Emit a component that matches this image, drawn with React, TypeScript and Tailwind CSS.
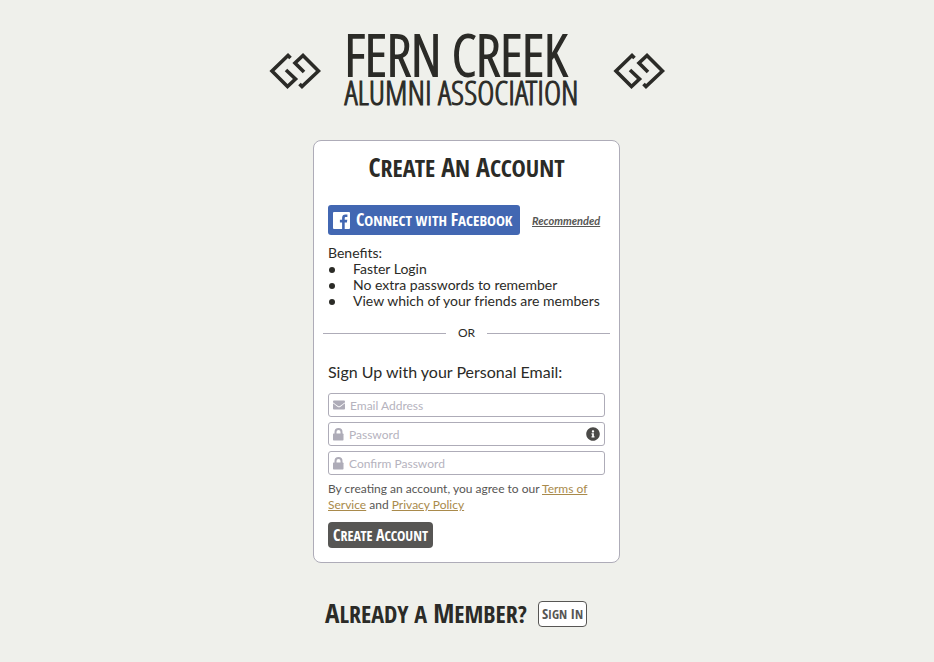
import React from 'react';
import { FaEnvelope, FaInfoCircle } from 'react-icons/fa';

const display = "font-['Open_Sans_Condensed','Roboto_Condensed',sans-serif] font-bold";

function Caps({ text, initial }: { text: string; initial: string }) {
  return (
    <>
      {text.split(' ').map((word, i) => (
        <React.Fragment key={i}>
          {i > 0 && ' '}
          <span className={`inline-block uppercase ${/^[A-Z]/.test(word) ? initial : ''}`}>{word}</span>
        </React.Fragment>
      ))}
    </>
  );
}

function Emblem() {
  return (
    <svg width="52" height="38" viewBox="0 0 52 38" fill="none" stroke="#2b2b27" strokeWidth="3.600" aria-hidden="true">
      <path d="M21.500 6 L19 3.500 L3 19 L18.500 34.500 L26.500 27 L17 18" />
      <path d="M30.500 32 L33 34.500 L49.500 19 L34 3.500 L26 11 L35 20" />
    </svg>
  );
}

function LockIcon() {
  return (
    <svg width="11" height="13" viewBox="0 0 11 13" aria-hidden="true">
      <path d="M2.500 6V4a3 3 0 0 1 6 0v2" fill="none" stroke="currentColor" strokeWidth="2" />
      <rect y="5.500" width="10.500" height="7" rx="0.700" fill="currentColor" />
    </svg>
  );
}

function Field({ id, label, type, icon, extra }: { id: string; label: string; type: string; icon: React.ReactNode; extra?: React.ReactNode }) {
  return (
    <div className="flex h-6 items-center gap-[5px] rounded-[3px] border border-[#aeacb8] bg-white px-1 text-[#aeacb8]">
      <label htmlFor={id} aria-label={label} className="shrink-0">{icon}</label>
      <input id={id} type={type} placeholder={label} className="min-w-0 flex-1 pt-px text-xs text-[#2b2b27] outline-none placeholder:text-[#b5b3be]" />
      {extra}
    </div>
  );
}

export default function App() {
  return (
    <main className="flex min-h-screen flex-col items-center bg-[#eff0eb] pt-8 pr-px pb-8 font-['Lato',sans-serif] text-[#2b2b27]">
      <header className="flex items-center gap-6">
        <Emblem />
        <h1 className="flex w-[244px] flex-col font-['Open_Sans_Condensed_Light','Open_Sans_Condensed','Roboto_Condensed',sans-serif] font-light whitespace-nowrap uppercase">
          <span className="text-[57px] leading-[44px] [-webkit-text-stroke:2px_#2b2b27]">Fern Creek</span>
          <span className="text-[33px] leading-[34px] [-webkit-text-stroke:1px_#2b2b27]">Alumni Association</span>
        </h1>
        <Emblem />
      </header>

      <section className="mt-[30px] w-full max-w-[307px] rounded-lg border border-[#aeacb8] bg-white px-[14px] pt-[7px] pb-[14px]">
        <h2 className={`text-center text-2xl leading-[38px] whitespace-nowrap ${display}`}>
          <Caps text="Create An Account" initial="first-letter:text-[26px]" />
        </h2>

        <div className="mt-[18px] flex items-center gap-3">
          <button type="button" className={`flex h-[30px] w-48 items-center gap-[6px] rounded-[3px] bg-[#4267b2] pl-[5px] text-[15px] leading-5 whitespace-nowrap text-white ${display}`}>
            <svg width="17" height="17" viewBox="0 0 17 17" className="shrink-0" aria-hidden="true">
              <path fill="#fff" d="M1 0h15a1 1 0 0 1 1 1v15a1 1 0 0 1-1 1h-4.300v-6.600h2.200l.4-2.600h-2.600V6.200c0-.8.3-1.300 1.300-1.300h1.400V2.600c-.3 0-1-.1-2-.1-2 0-3.300 1.200-3.300 3.400v1.900H6.900v2.600h2.200V17H1a1 1 0 0 1-1-1V1a1 1 0 0 1 1-1z" />
            </svg>
            <span className="pb-[2px]"><Caps text="Connect with Facebook" initial="first-letter:text-lg" /></span>
          </button>
          <a href="#recommended" className="pt-[2px] text-[11px] font-bold text-[#575654] italic underline">Recommended</a>
        </div>

        <div className="mt-[10px] text-sm leading-4 whitespace-nowrap">
          <p>Benefits:</p>
          <ul>
            {['Faster Login', 'No extra passwords to remember', 'View which of your friends are members'].map((item) => (
              <li key={item} className="flex items-center gap-[18px]">
                <span className="mt-px ml-[1px] size-[6px] rounded-full bg-[#2b2b27]" />
                {item}
              </li>
            ))}
          </ul>
        </div>

        <div className="-mx-[5px] mt-4 flex items-center gap-3 text-xs leading-4">
          <span className="h-px flex-1 bg-[#aeacb8]" />
          <span>OR</span>
          <span className="h-px flex-1 bg-[#aeacb8]" />
        </div>

        <form onSubmit={(e) => e.preventDefault()}>
          <h3 className="mt-[19px] text-base leading-6">Sign Up with your Personal Email:</h3>
          <div className="mt-[9px] flex flex-col gap-[5px]">
            <Field id="email" type="email" label="Email Address" icon={<FaEnvelope size={12} />} />
            <Field
              id="password"
              type="password"
              label="Password"
              icon={<LockIcon />}
              extra={<button type="button" aria-label="Password requirements" className="text-[#4b4a48]"><FaInfoCircle size={14} /></button>}
            />
            <Field id="confirm" type="password" label="Confirm Password" icon={<LockIcon />} />
          </div>
          <p className="mt-[6px] text-xs leading-4 text-[#575654]">
            By creating an account, you agree to our <a href="#terms" className="text-[#a98a4b] underline">Terms of Service</a> and{' '}
            <a href="#privacy" className="text-[#a98a4b] underline">Privacy Policy</a>
          </p>
          <button type="submit" className={`mt-[9px] h-[26px] w-[105px] rounded-[4px] bg-[#575654] text-sm whitespace-nowrap text-white ${display}`}>
            <Caps text="Create Account" initial="first-letter:text-base" />
          </button>
        </form>
      </section>

      <div className="mt-[31px] flex w-full max-w-[307px] items-center gap-[11px] pl-3">
        <h2 className={`text-2xl leading-[38px] whitespace-nowrap ${display}`}>
          <Caps text="Already a Member?" initial="first-letter:text-[27px]" />
        </h2>
        <a href="#signin" className={`flex h-[26px] items-center rounded-[4px] border border-[#575654] bg-white px-[3px] text-[13px] whitespace-nowrap text-[#575654] ${display}`}>
          <span><Caps text="Sign In" initial="first-letter:text-[15px]" /></span>
        </a>
      </div>
    </main>
  );
}
